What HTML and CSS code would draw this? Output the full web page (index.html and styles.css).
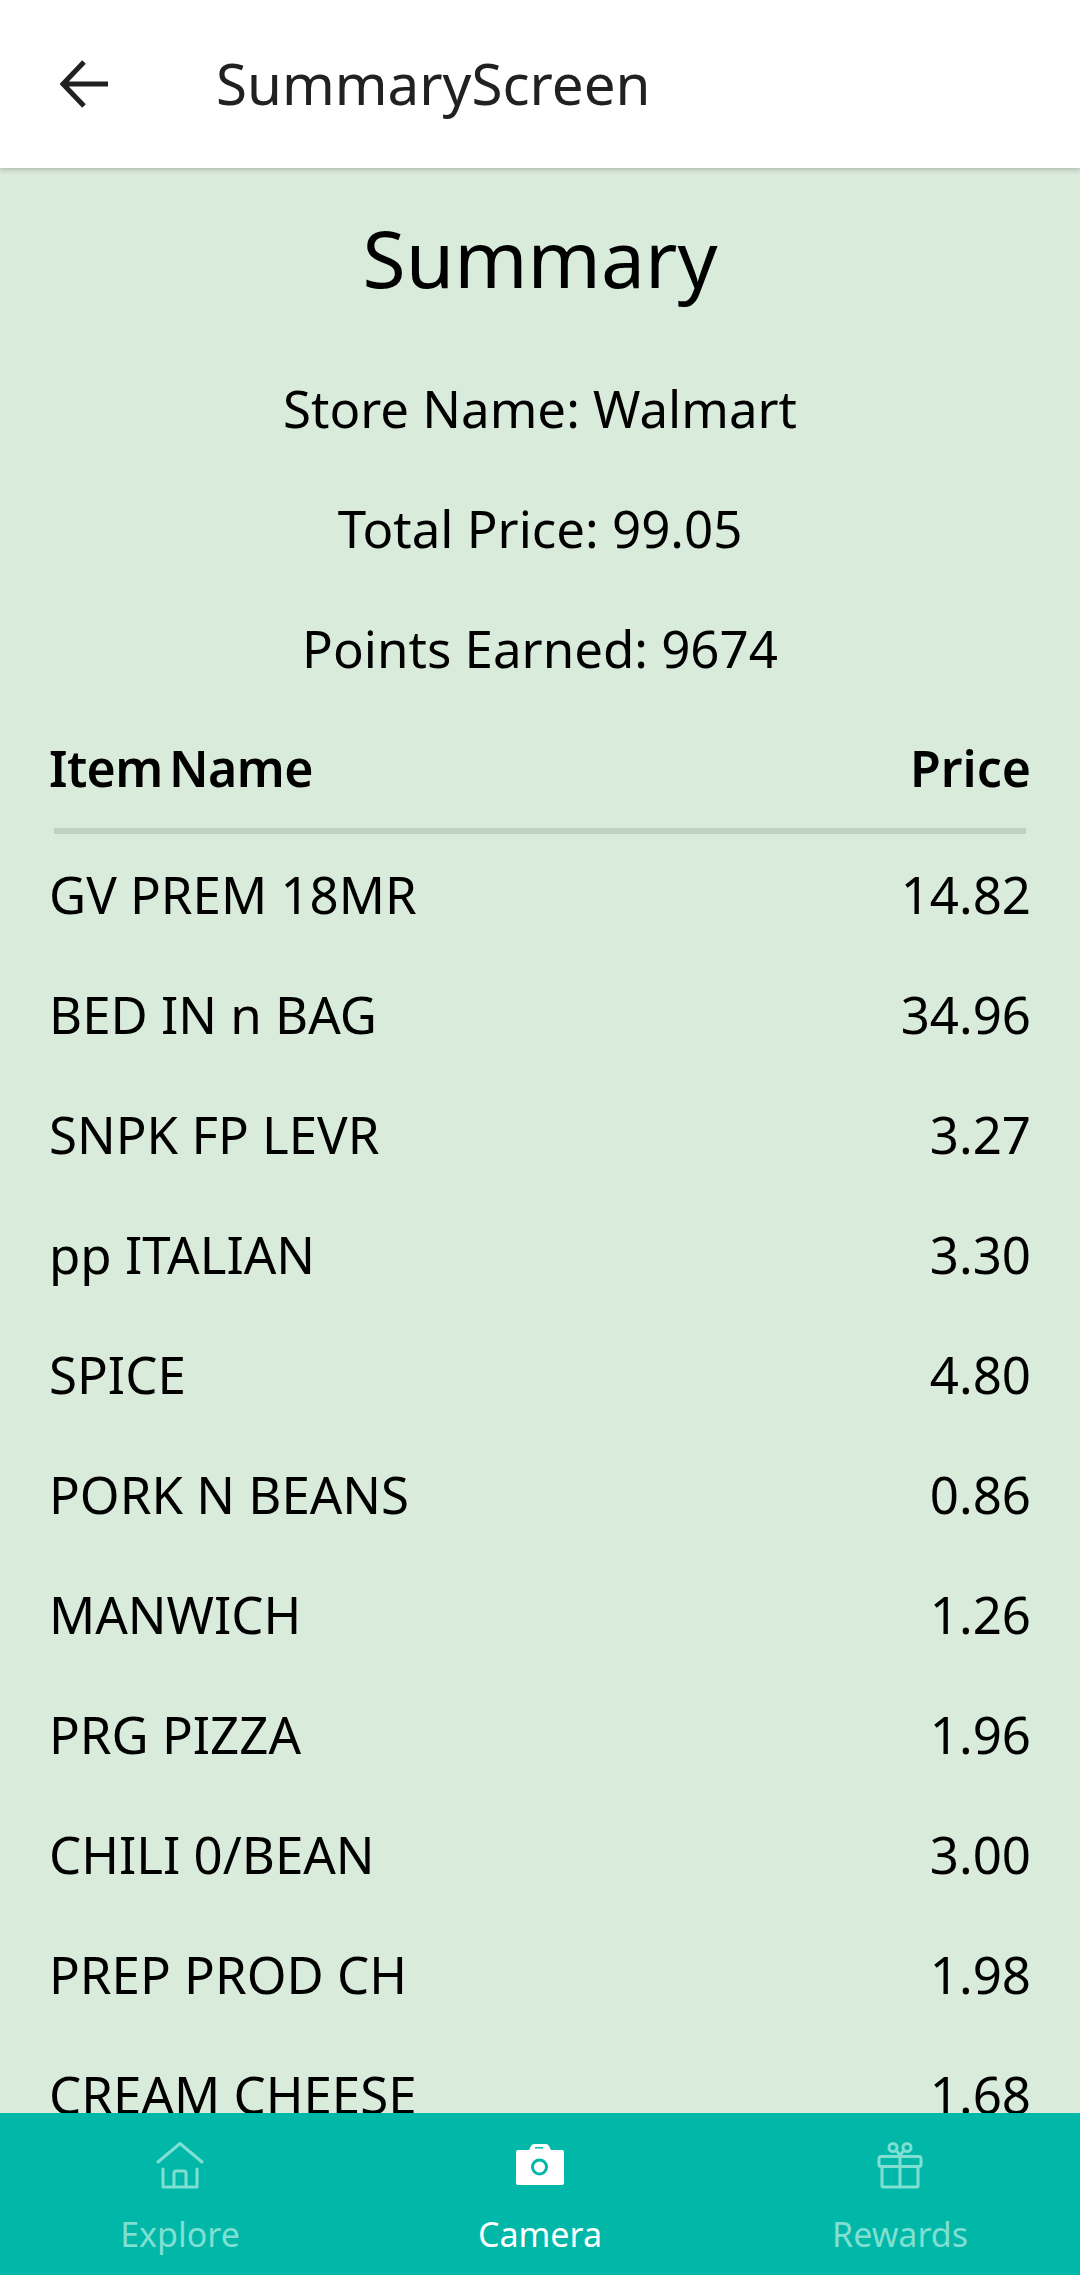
FILE: index.html
```html
<!DOCTYPE html>
<html>
  <head>
    <meta charset="UTF-8" />
    <title>SummaryScreen</title>
    <link rel="stylesheet" href="styles.css">
  </head>

  <body>
    <div class="screen">
      <header class="app-bar">
        <svg class="back-icon" viewBox="0 0 48 48" width="48" height="48">
          <path d="M48 24H4M24 2L3 24l21 22" fill="none" stroke="#212121" stroke-width="5" />
        </svg>
        <span class="app-title">SummaryScreen</span>
      </header>

      <main class="content">
        <h1 class="title">Summary</h1>
        <div class="line">Store Name: Walmart</div>
        <div class="line">Total Price: 99.05</div>
        <div class="line">Points Earned: 9674</div>

        <div class="row row-head">
          <span class="head-name">Item Name</span>
          <span>Price</span>
        </div>
        <div class="divider"></div>

        <div class="row"><span>GV PREM 18MR</span><span>14.82</span></div>
        <div class="row"><span>BED IN n BAG</span><span>34.96</span></div>
        <div class="row"><span>SNPK FP LEVR</span><span>3.27</span></div>
        <div class="row"><span>pp ITALIAN</span><span>3.30</span></div>
        <div class="row"><span>SPICE</span><span>4.80</span></div>
        <div class="row"><span>PORK N BEANS</span><span>0.86</span></div>
        <div class="row"><span>MANWICH</span><span>1.26</span></div>
        <div class="row"><span>PRG PIZZA</span><span>1.96</span></div>
        <div class="row"><span>CHILI 0/BEAN</span><span>3.00</span></div>
        <div class="row"><span>PREP PROD CH</span><span>1.98</span></div>
        <div class="row"><span>CREAM CHEESE</span><span>1.68</span></div>
      </main>

      <nav class="tabs">
        <div class="tab">
          <svg class="tab-icon" viewBox="0 0 48 48" width="48" height="48">
            <path d="M2 20L24 1.500 46 20M7 27v18h34V27M18 45V31q0-2 2-2h8q2 0 2 2v14" fill="none" stroke="currentColor" stroke-width="3" stroke-linecap="round" stroke-linejoin="round" />
          </svg>
          <span>Explore</span>
        </div>
        <div class="tab tab-active">
          <svg class="tab-icon" viewBox="0 0 48 48" width="48" height="48">
            <path d="M2 8h11l2-4q1-2 3-2h12q2 0 3 2l2 4h11q2 0 2 2v31q0 2-2 2H2q-2 0-2-2V10q0-2 2-2z" fill="currentColor" />
            <path d="M19 5h8v1.500h-8z" fill="#00b7a8" />
            <circle cx="23.500" cy="25" r="7" fill="none" stroke="#00b7a8" stroke-width="3" />
          </svg>
          <span>Camera</span>
        </div>
        <div class="tab">
          <svg class="tab-icon" viewBox="0 0 48 48" width="48" height="48">
            <rect x="3" y="14.500" width="42" height="10" rx="2" fill="none" stroke="currentColor" stroke-width="3" />
            <path d="M6 25v19q0 1 1 1h34q1 0 1-1V25M24 15v30M21 9l3 5 3-5" fill="none" stroke="currentColor" stroke-width="3" stroke-linejoin="round" />
            <circle cx="17" cy="5.500" r="4" fill="none" stroke="currentColor" stroke-width="3" />
            <circle cx="31" cy="5.500" r="4" fill="none" stroke="currentColor" stroke-width="3" />
          </svg>
          <span>Rewards</span>
        </div>
      </nav>
    </div>
  </body>
</html>
```

FILE: styles.css
```css
body {
  font-family: "Noto Sans", sans-serif;
  margin: 0;
  padding: 0;
}

.screen {
  width: 1080px;
  height: 2275px;
  display: flex;
  flex-direction: column;
  overflow: hidden;
  background-color: #d9ebdb;
}

.app-bar {
  height: 168px;
  flex-shrink: 0;
  display: flex;
  align-items: center;
  background-color: #fff;
  box-shadow: 0 2px 5px rgba(0, 0, 0, 0.2);
  z-index: 1;
}

.back-icon {
  margin-left: 60px;
  margin-right: 108px;
}

.app-title {
  font-size: 56.5px;
  margin-top: -2px;
  color: #212121;
}

.content {
  flex: 1;
  min-height: 0;
  overflow: hidden;
  color: #000;
}

.title {
  margin: 0;
  height: 180px;
  line-height: 180px;
  text-align: center;
  font-size: 78.5px;
  font-weight: normal;
}

.line {
  height: 120px;
  line-height: 120px;
  text-align: center;
  font-size: 51px;
}

.row {
  height: 120px;
  padding: 0 49px;
  display: flex;
  justify-content: space-between;
  align-items: center;
  font-size: 51px;
}

.row-head {
  height: 120px;
  font-size: 50px;
  font-weight: 600;
}

.head-name {
  letter-spacing: -0.6px;
  word-spacing: -6px;
}

.divider {
  height: 6px;
  margin: 0 54px;
  background-color: #c0d0c2;
}

.tabs {
  height: 162px;
  flex-shrink: 0;
  display: flex;
  background-color: #00b7a8;
  color: #7fdfd2;
  z-index: 1;
}

.tab {
  flex: 1;
  display: flex;
  flex-direction: column;
  align-items: center;
  padding-top: 29px;
  font-size: 34px;
}

.tab-active {
  color: #fff;
}

.tab-icon {
  display: block;
  margin-bottom: 21px;
}
```
